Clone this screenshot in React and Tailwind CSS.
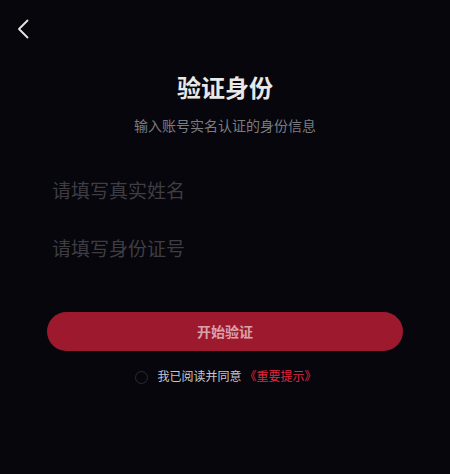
import React from 'react';

// Identity verification screen

const font = { fontFamily: '"Noto Sans", "Noto Sans CJK SC", sans-serif' };

export default function App() {
  return (
    <div className="w-[450px] h-[474px] bg-[#07060c] text-white flex flex-col" style={font}>
      {/* Back button */}
      <div className="h-[72px] pl-[17px] pt-[19px]">
        <svg width="12" height="20" viewBox="0 0 12 20" fill="none">
          <path d="M10.5 1.5L2 10L10.5 18.5" stroke="#e6e6e6" strokeWidth="1.8" strokeLinecap="round" strokeLinejoin="round" />
        </svg>
      </div>

      {/* Heading */}
      <h1 className="text-center text-[24px] leading-[32px] font-bold text-[#e8e8e8]">验证身份</h1>
      <p className="mt-[12px] text-center text-[14px] leading-[20px] text-[#7c7c80]">输入账号实名认证的身份信息</p>

      {/* Inputs */}
      <div className="mt-[42px] px-[52px] flex flex-col gap-[32px]">
        <input
          className="h-[26px] bg-transparent outline-none text-[19px] leading-[26px] text-[#e8e8e8] placeholder:text-[#3e3d43]"
          placeholder="请填写真实姓名"
        />
        <input
          className="h-[26px] bg-transparent outline-none text-[19px] leading-[26px] text-[#e8e8e8] placeholder:text-[#3e3d43]"
          placeholder="请填写身份证号"
        />
      </div>

      {/* Submit */}
      <div className="mt-[50px] px-[47px]">
        <button className="w-full h-[39px] rounded-full bg-[#9d1a2e] text-[14px] font-bold text-[#d9a1aa]">
          开始验证
        </button>
      </div>

      {/* Agreement */}
      <div className="mt-[17px] flex items-center justify-center gap-[9px] text-[12px] leading-[18px] pl-[2px]">
        <span className="w-[13px] h-[13px] rounded-full border border-[#2c2b31]" />
        <span className="text-[#c8c8cc]">
          我已阅读并同意 <span className="text-[#e0263f]">《重要提示》</span>
        </span>
      </div>
    </div>
  );
}
